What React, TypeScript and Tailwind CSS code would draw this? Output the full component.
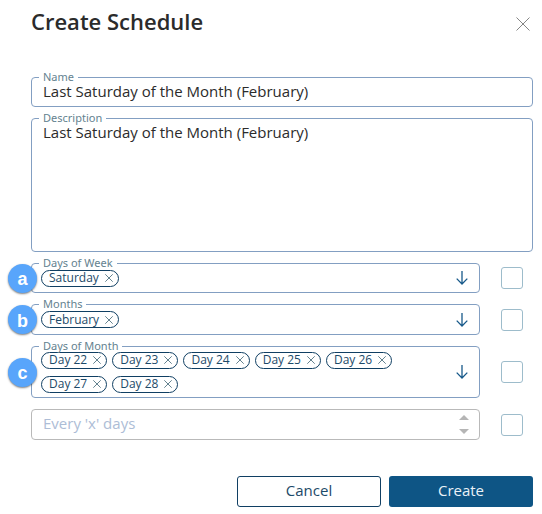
import { useState, type ReactNode } from "react";
import { clsx } from "clsx";

const font = "font-['Open_Sans','Noto_Sans',sans-serif]";

type FieldProps = {
  id: string;
  label: string;
  className?: string;
  children: ReactNode;
};

function Field({ id, label, className, children }: FieldProps) {
  return (
    <div className={clsx("relative flex rounded border border-[#839fc2]", className)}>
      <label
        id={`${id}-label`}
        htmlFor={id}
        className="absolute -top-[6px] left-[7px] bg-white px-1 font-['Noto_Sans',sans-serif] text-[11px] leading-[10px] text-[#64828f]"
      >
        {label}
      </label>
      {children}
    </div>
  );
}

function Cross({ className }: { className?: string }) {
  return (
    <svg viewBox="0 0 14 14" fill="none" stroke="currentColor" className={className} aria-hidden="true">
      <path d="M0.5 0.5 13.5 13.5M13.5 0.5 0.5 13.5" vectorEffect="non-scaling-stroke" />
    </svg>
  );
}

function Chip({ text, onRemove }: { text: string; onRemove: () => void }) {
  return (
    <span className="flex h-[17px] items-center gap-[6px] rounded-full border border-[#103f63] pr-[5px] pl-[7px] text-xs leading-none text-[#1d4a69]">
      {text}
      <button type="button" aria-label={`Remove ${text}`} onClick={onRemove} className="text-[#64828f]">
        <Cross className="size-2" />
      </button>
    </span>
  );
}

type PickerProps = {
  id: string;
  label: string;
  badge: string;
  items: string[];
  className?: string;
};

function Picker({ id, label, badge, items, className }: PickerProps) {
  const [selected, setSelected] = useState(items);

  return (
    <Row label={label}>
      <Field id={id} label={label} className={clsx("flex-1 items-center pr-[11px] pl-[9px]", className)}>
        <span className="absolute -left-6 flex size-[29px] items-center justify-center rounded-full bg-[#58a5fb] pt-[2px] font-['Liberation_Sans',sans-serif] text-lg leading-none font-bold text-white shadow-[0_1px_2px_rgba(0,0,0,0.5)]">
          {badge}
        </span>
        <div className="flex flex-1 flex-wrap gap-x-[5px] gap-y-[7px]">
          {selected.map((s) => (
            <Chip key={s} text={s} onRemove={() => setSelected(selected.filter((v) => v !== s))} />
          ))}
        </div>
        <button id={id} type="button" aria-haspopup="listbox" className="text-[#17598a]">
          <svg viewBox="0 0 12 14" fill="none" stroke="currentColor" strokeWidth="1.3" className="h-[14px] w-3" aria-hidden="true">
            <path d="M6 0V13M0.7 7.6 6 13 11.3 7.6" />
          </svg>
        </button>
      </Field>
    </Row>
  );
}

function Row({ label, children }: { label: string; children: ReactNode }) {
  return (
    <div className="flex items-center gap-[21px] pr-[10px]">
      {children}
      <input
        type="checkbox"
        aria-label={`Use ${label}`}
        className="size-[22px] appearance-none rounded-[3px] border border-[#9dbccb] bg-white checked:bg-[#0e5585]"
      />
    </div>
  );
}

export default function App() {
  const [name, setName] = useState("Last Saturday of the Month (February)");
  const [description, setDescription] = useState("Last Saturday of the Month (February)");

  return (
    <form className={clsx(font, "bg-white pt-[7px] pr-[9px] pb-[7px] pl-[31px] text-[15px] text-[#2b2b2b]")}>
      <header className="flex items-center justify-between pr-[3px]">
        <h1 className="text-[22px] leading-7 font-semibold">Create Schedule</h1>
        <button type="button" aria-label="Close" className="pt-[6px] text-[#858585]">
          <Cross className="size-[14px]" />
        </button>
      </header>

      <div className="mt-[42px] flex flex-col gap-[11px]">
        <Field id="name" label="Name" className="h-[30px]">
          <input
            id="name"
            value={name}
            onChange={(e) => setName(e.target.value)}
            className="w-full px-[11px] pb-[2px] outline-none"
          />
        </Field>
        <Field id="description" label="Description" className="h-[134px]">
          <textarea
            id="description"
            value={description}
            onChange={(e) => setDescription(e.target.value)}
            className="w-full resize-none px-[11px] pt-[3px] leading-5 outline-none"
          />
        </Field>

        <Picker id="week" label="Days of Week" badge="a" items={["Saturday"]} className="min-h-[30px]" />
        <Picker id="months" label="Months" badge="b" items={["February"]} className="min-h-[31px]" />
        <Picker
          id="days"
          label="Days of Month"
          badge="c"
          items={["Day 22", "Day 23", "Day 24", "Day 25", "Day 26", "Day 27", "Day 28"]}
          className="min-h-[52px]"
        />

        <Row label="Every 'x' days">
          <div className="flex h-[31px] flex-1 items-center rounded border border-[#b9b9b9] pr-[10px]">
            <input
              type="text"
              inputMode="numeric"
              aria-label="Every 'x' days"
              placeholder="Every 'x' days"
              className="min-w-0 flex-1 px-[11px] pb-[2px] outline-none placeholder:text-[#adbdd6]"
            />
            <div className="flex flex-col gap-[9px] text-[#b5b5b5]">
              <button type="button" aria-label="Increase">
                <svg viewBox="0 0 10 5" className="h-[5px] w-[10px]" fill="currentColor" aria-hidden="true">
                  <path d="M0 5 5 0 10 5Z" />
                </svg>
              </button>
              <button type="button" aria-label="Decrease">
                <svg viewBox="0 0 10 5" className="h-[5px] w-[10px]" fill="currentColor" aria-hidden="true">
                  <path d="M0 0H10L5 5Z" />
                </svg>
              </button>
            </div>
          </div>
        </Row>
      </div>

      <footer className="mt-9 flex justify-end gap-2">
        <button type="button" className="h-[31px] w-36 rounded-[3px] border border-[#103f63] pb-[2px] text-[#1d4a69]">
          Cancel
        </button>
        <button type="submit" className="h-[31px] w-36 rounded-[3px] bg-[#0e5585] pb-[2px] text-[#eaf2f8]">
          Create
        </button>
      </footer>
    </form>
  );
}
